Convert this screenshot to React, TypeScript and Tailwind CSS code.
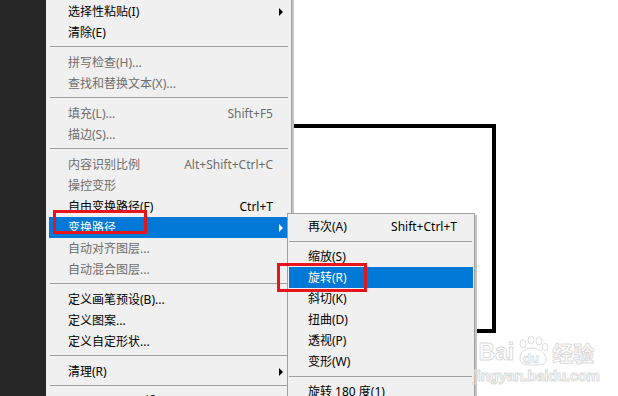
type Item =
  | { sep: true }
  | {
      sep?: false;
      label: string;
      shortcut?: string;
      arrow?: boolean;
      disabled?: boolean;
      active?: boolean;
    };

const mainItems: Item[] = [
  { label: "选择性粘贴(I)", arrow: true },
  { label: "清除(E)" },
  { sep: true },
  { label: "拼写检查(H)...", disabled: true },
  { label: "查找和替换文本(X)...", disabled: true },
  { sep: true },
  { label: "填充(L)...", shortcut: "Shift+F5", disabled: true },
  { label: "描边(S)...", disabled: true },
  { sep: true },
  { label: "内容识别比例", shortcut: "Alt+Shift+Ctrl+C", disabled: true },
  { label: "操控变形", disabled: true },
  { label: "自由变换路径(F)", shortcut: "Ctrl+T" },
  { label: "变换路径", arrow: true, active: true },
  { label: "自动对齐图层...", disabled: true },
  { label: "自动混合图层...", disabled: true },
  { sep: true },
  { label: "定义画笔预设(B)..." },
  { label: "定义图案..." },
  { label: "定义自定形状..." },
  { sep: true },
  { label: "清理(R)", arrow: true },
  { sep: true },
  { label: "Adobe PDF 预设..." },
];

const subItems: Item[] = [
  { label: "再次(A)", shortcut: "Shift+Ctrl+T" },
  { sep: true },
  { label: "缩放(S)" },
  { label: "旋转(R)", active: true },
  { label: "斜切(K)" },
  { label: "扭曲(D)" },
  { label: "透视(P)" },
  { label: "变形(W)" },
  { sep: true },
  { label: "旋转 180 度(1)" },
  { label: "旋转 90 度(顺时针)(9)" },
];

function Arrow({ white }: { white?: boolean }) {
  return (
    <span
      className={`block w-0 h-0 border-y-[4px] border-y-transparent border-l-[4px] ${
        white ? "border-l-white" : "border-l-black"
      }`}
    />
  );
}

function MenuRows({ items, sub }: { items: Item[]; sub?: boolean }) {
  return (
    <>
      {items.map((it, i) => {
        if (it.sep) {
          return (
            <div key={i} className="h-[9px] shrink-0">
              <div
                className={`h-px bg-[#a0a0a0] ${
                  sub ? "mt-[4px] ml-[1px] mr-[2px]" : "mt-[3px] ml-[4px] mr-[3px]"
                }`}
              />
            </div>
          );
        }
        const color = it.active
          ? "bg-[#0078d7] text-white"
          : it.disabled
          ? "text-[#6d6d6d]"
          : "text-black";
        return (
          <div
            key={i}
            className={`h-[21px] shrink-0 flex items-center leading-none ${color} ${
              sub ? "mx-[1px] pl-[19px] pr-[16px]" : "mx-[3px] pl-[19px]"
            }`}
          >
            <span className="flex-1 whitespace-nowrap">{it.label}</span>
            {it.shortcut && <span className="whitespace-nowrap">{it.shortcut}</span>}
            {!sub && (
              <span className="w-[15px] flex justify-end pr-[5px]">
                {it.arrow && <Arrow white={it.active} />}
              </span>
            )}
          </div>
        );
      })}
    </>
  );
}

function Watermark() {
  return (
    <div className="absolute left-[473px] top-[338px] flex flex-col items-center text-transparent [-webkit-text-stroke:1px_#dcdcdc] font-['Liberation_Sans','Noto_Sans_CJK_SC',sans-serif]">
      <div className="flex items-end h-[26px]">
        <span className="text-[23px] font-bold leading-none">Bai</span>
        <svg width="36" height="30" viewBox="0 0 36 30" className="-mb-[2px]">
          <g fill="none" stroke="#dcdcdc" strokeWidth="1">
            <ellipse cx="9" cy="8" rx="3" ry="4" />
            <ellipse cx="17" cy="4" rx="3" ry="4" />
            <ellipse cx="25" cy="5" rx="3" ry="4" />
            <ellipse cx="31" cy="11" rx="3" ry="3.5" />
            <path d="M6 22 C6 14 14 12 18 12 C24 12 32 16 32 24 C32 29 26 29 19 29 C10 29 6 28 6 22 Z" />
          </g>
          <text x="9" y="27" fontSize="13" fontWeight="bold" fill="none" stroke="#dcdcdc" strokeWidth="0.8" fontFamily="Liberation Sans, sans-serif">du</text>
        </svg>
        <span className="text-[21px] font-bold leading-none ml-[2px]">经验</span>
      </div>
      <span className="text-[15px] font-bold leading-none mt-[4px] tracking-[-0.3px]">jingyan.baidu.com</span>
    </div>
  );
}

export default function App() {
  return (
    <div className="relative w-[618px] h-[396px] overflow-hidden flex bg-white text-[12px] font-['Segoe_UI','Noto_Sans','Noto_Sans_CJK_SC',sans-serif]">
      {/* dark side panel */}
      <div className="w-[46px] shrink-0 bg-[#262626]" />

      {/* main menu */}
      <div className="w-[246px] shrink-0 bg-[#f0f0f0] border-r border-[#a0a0a0] flex flex-col pt-[1px]">
        <MenuRows items={mainItems} />
      </div>
      <div className="w-[2px] shrink-0 bg-[#c4c4c4]" />

      {/* canvas */}
      <div className="relative flex-1 bg-white overflow-hidden">
        <div className="absolute left-[-60px] top-[124px] w-[262px] h-[209px] border-4 border-black" />
      </div>

      {/* submenu */}
      <div className="absolute left-[287px] top-[213px] w-[188px] h-[200px] bg-[#f0f0f0] border border-[#a0a0a0] shadow-[2px_2px_0_#c4c4c4] flex flex-col pt-[2px]">
        <MenuRows items={subItems} sub />
      </div>

      <Watermark />

      {/* annotation boxes */}
      <div className="absolute left-[53px] top-[210px] w-[94px] h-[24px] border-[3px] border-[#e8141c]" />
      <div className="absolute left-[277px] top-[263px] w-[90px] h-[29px] border-[3px] border-[#e8141c]" />
    </div>
  );
}
